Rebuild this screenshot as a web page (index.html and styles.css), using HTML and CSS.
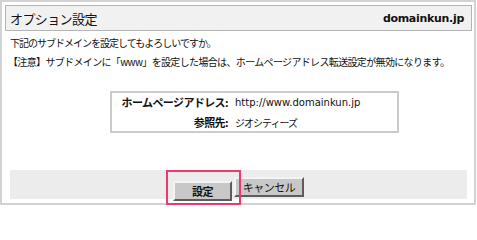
FILE: index.html
```html
<!DOCTYPE html>
<html lang="ja">
<head>
<meta charset="utf-8">
<link rel="stylesheet" href="styles.css">
</head>
<body>
<div class="frame">
  <div class="header">
    <span class="title">オプション設定</span>
    <span class="domain">domainkun.jp</span>
  </div>
  <div class="msg">
    <p class="line">下記のサブドメインを設定してもよろしいですか。</p>
    <p class="line note">【注意】サブドメインに「www」を設定した場合は、ホームページアドレス転送設定が無効になります。</p>
  </div>
  <div class="info">
    <div class="row"><span class="label">ホームページアドレス:</span><span class="value url">http://www.domainkun.jp</span></div>
    <div class="row"><span class="label">参照先:</span><span class="value">ジオシティーズ</span></div>
  </div>
  <div class="actions">
    <span class="hl"><button class="btn primary">設定</button></span>
    <button class="btn">キャンセル</button>
  </div>
</div>
</body>
</html>
```

FILE: styles.css
```css
html, body { margin: 0; padding: 0; background: #fff; }
body { font-family: "Noto Sans CJK JP", "DejaVu Sans", sans-serif; color: #111; }
.frame {
  box-sizing: border-box;
  width: 476px;
  height: 205px;
  border: 2px solid #d2d2d2;
  padding: 3px 2px 0 3px;
}
.header {
  box-sizing: border-box;
  height: 26px;
  border: 1px solid #b4b4b4;
  background: #f1f1f1;
  display: flex;
  align-items: center;
  justify-content: space-between;
  padding: 0 7px 0 4px;
}
.title { font-size: 13px; letter-spacing: -0.6px; }
.domain { font-family: "DejaVu Sans", sans-serif; font-weight: bold; font-size: 11px; letter-spacing: -0.3px; }
.msg { padding: 2px 0 0 5px; }
.line { margin: 0; font-size: 10px; line-height: 19px; letter-spacing: -1px; white-space: nowrap; }
.line.note { margin-left: -2px; letter-spacing: -0.65px; }
.info {
  box-sizing: border-box;
  width: 289px;
  height: 42px;
  margin: 20px 0 0 105px;
  border: 2px solid #cbcbcb;
  display: flex;
  flex-direction: column;
  justify-content: center;
  gap: 3px;
}
.row { display: flex; align-items: center; height: 17px; }
.label { width: 116px; text-align: right; font-weight: bold; font-size: 11px; letter-spacing: -0.6px; }
.value { margin-left: 7px; font-size: 10px; letter-spacing: -1px; }
.value.url { font-family: "DejaVu Sans", sans-serif; letter-spacing: 0; font-size: 10px; }
.actions {
  box-sizing: border-box;
  height: 29px;
  margin: 37px 5px 0 5px;
  background: #ececec;
  display: flex;
  justify-content: center;
  align-items: flex-start;
  padding-top: 7px;
  gap: 2px;
}
.btn {
  box-sizing: border-box;
  height: 20px;
  margin: 0;
  padding: 0;
  font-family: "Noto Sans CJK JP", sans-serif;
  font-size: 11px;
  letter-spacing: -0.5px;
  color: #111;
  background: #c8c8c8;
  border: 2px solid;
  border-color: #f4f4f4 #5c5c5c #5c5c5c #f4f4f4;
  width: 70px;
}
.btn.primary { width: 59px; font-weight: bold; }
.hl { position: relative; display: block; }
.hl::after {
  content: "";
  position: absolute;
  left: -7px;
  top: -7px;
  right: -9px;
  bottom: -4px;
  border: 2px solid #ec3a6e;
}
```
